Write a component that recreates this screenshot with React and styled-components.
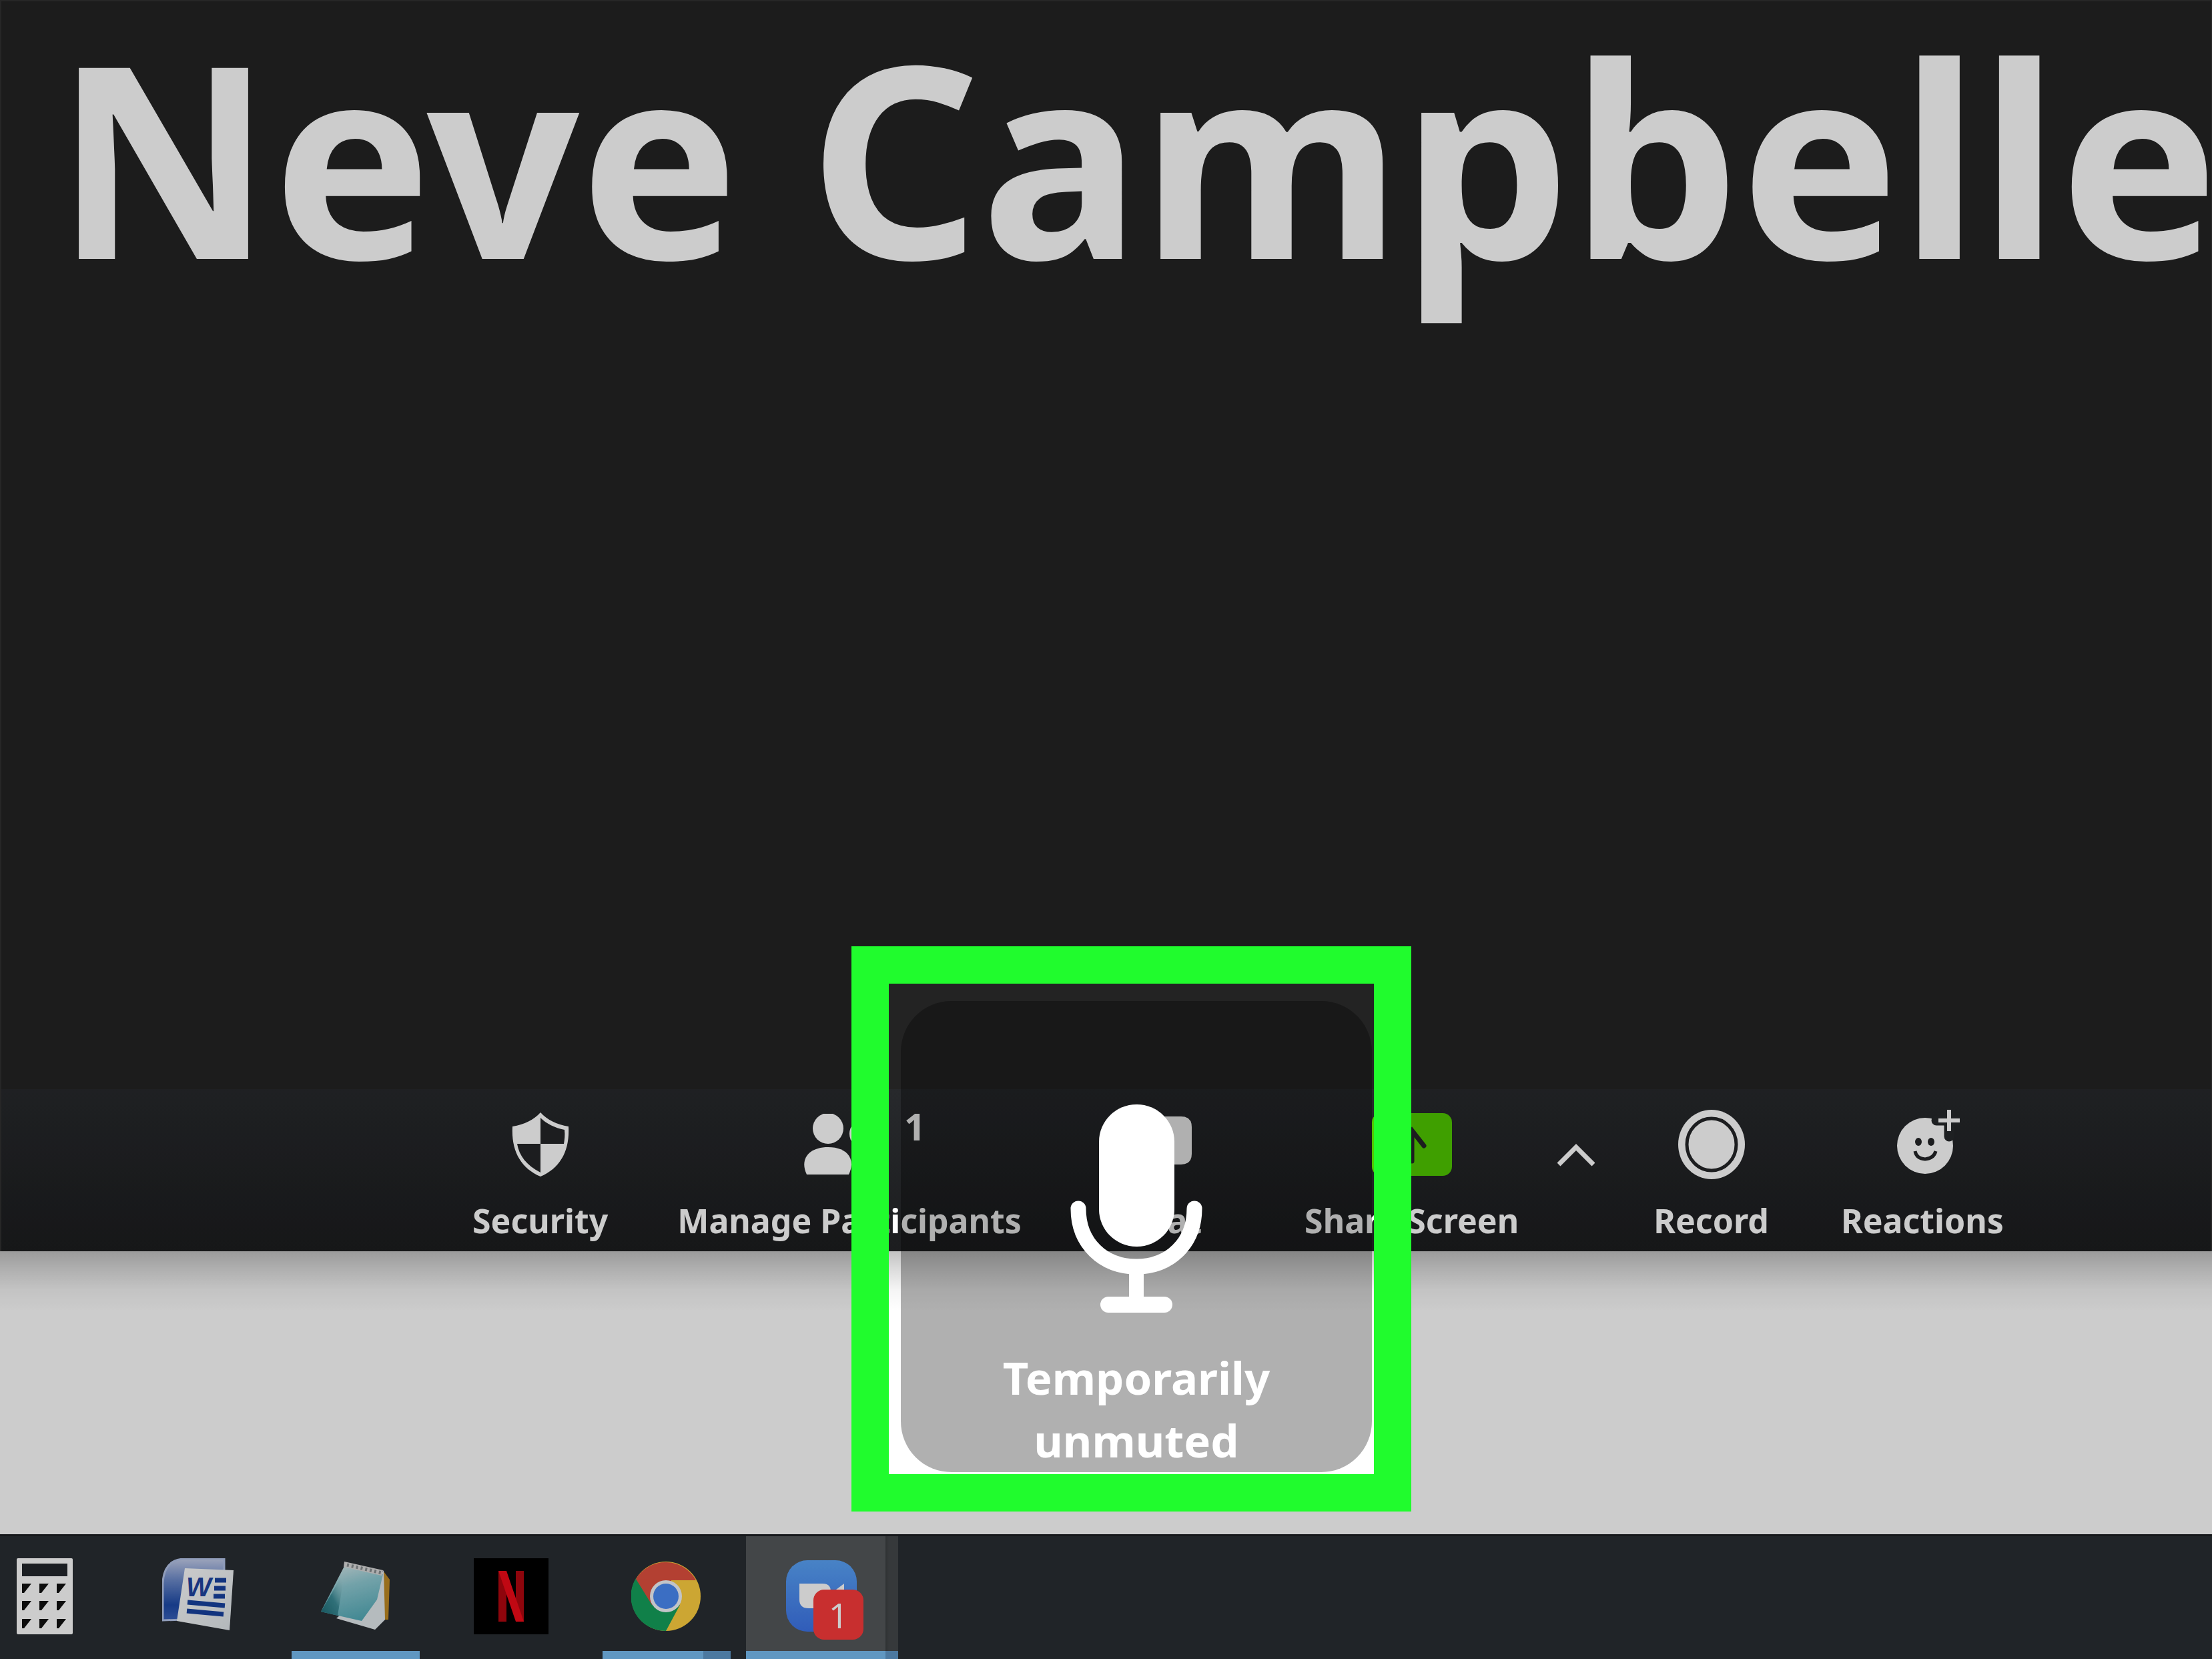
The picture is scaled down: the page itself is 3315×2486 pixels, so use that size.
import React from 'react';
import styled, { createGlobalStyle } from 'styled-components';

const GlobalStyle = createGlobalStyle`
  *, *::before, *::after { box-sizing: border-box; }
  body {
    margin: 0;
    background: #fff;
    font-family: "Noto Sans", "Open Sans", sans-serif;
  }
  button {
    border: 0;
    padding: 0;
    background: none;
    color: inherit;
    font: inherit;
    cursor: pointer;
  }
  svg { display: block; }
`;

const Screen = styled.div`
  position: relative;
  display: flex;
  flex-direction: column;
  min-height: 100vh;
  overflow: hidden;
  background: #fff;
`;

const MeetingWindow = styled.main`
  flex: 1;
  display: flex;
  flex-direction: column;
  border: 2px solid #313131;
  border-bottom: 0;
  background: #232323;
`;

const Stage = styled.section`
  flex: 1;
  padding: 30px 0 0 80px;
`;

const ParticipantName = styled.h1`
  margin: 0;
  color: #fff;
  font-size: 401px;
  font-weight: 700;
  line-height: 400px;
  white-space: nowrap;
`;

const Toolbar = styled.nav`
  display: flex;
  align-items: flex-start;
  padding: 31px 0 12px 706px;
  background: linear-gradient(#27292c, #1c1d1f);
  color: #fff;
`;

const ToolButton = styled.button`
  flex: none;
  display: flex;
  flex-direction: column;
  align-items: center;
  gap: 28px;
  margin-left: ${(p) => p.$before || 0}px;
`;

const ToolIcon = styled.span`
  position: relative;
  display: flex;
  align-items: center;
  height: 104px;
`;

const ToolLabel = styled.span`
  font-size: 50px;
  font-weight: 700;
  line-height: 68px;
  white-space: nowrap;
`;

const Count = styled.span`
  position: absolute;
  top: -4px;
  left: 100%;
  padding-left: 12px;
  font-size: 56px;
  font-weight: 700;
  line-height: 56px;
`;

const Desktop = styled.div`
  height: 424px;
  background: linear-gradient(
    rgba(0, 0, 0, 0.24),
    rgba(0, 0, 0, 0.14) 26px,
    rgba(0, 0, 0, 0.04) 58px,
    rgba(0, 0, 0, 0) 90px
  );
`;

const Taskbar = styled.nav`
  display: flex;
  gap: 5px;
  height: 187px;
  margin-left: -47px;
  background: #292d33;
  border-top: 3px solid #1c1f22;
`;

const TaskButton = styled.button`
  flex: none;
  position: relative;
  display: flex;
  flex-direction: column;
  align-items: center;
  justify-content: space-between;
  width: 228px;
  padding-top: 33px;
  background: ${(p) => (p.$active ? 'linear-gradient(90deg, #54585a 209px, #3b3e40 209px, #44484a 214px)' : 'none')};
`;

const Underline = styled.span`
  width: ${(p) => (p.$wide ? '100%' : '192px')};
  height: 12px;
  background: ${(p) =>
    p.$stack ? `linear-gradient(90deg, #78bdf2 ${p.$stack}px, #6098c8 ${p.$stack}px)` : '#78bdf2'};
`;

const Badge = styled.span`
  position: absolute;
  top: 80px;
  left: 101px;
  width: 75px;
  height: 75px;
  border-radius: 16px;
  background: #fb3b3b;
  color: #fff;
  font-family: "Open Sans", sans-serif;
  font-size: 52px;
  font-weight: 400;
  line-height: 75px;
  text-align: center;
`;

const Spotlight = styled.div`
  position: absolute;
  left: 1276px;
  bottom: 221px;
  display: flex;
  width: 839px;
  height: 847px;
  padding: 26px 3px 3px 18px;
  border: 56px solid #20fc2d;
  box-shadow: 0 0 0 4000px rgba(0, 0, 0, 0.2);
  pointer-events: none;
`;

const Toast = styled.div`
  flex: 1;
  display: flex;
  flex-direction: column;
  align-items: center;
  gap: 50px;
  padding-top: 155px;
  border-radius: 76px;
  background: rgba(0, 0, 0, 0.31);
  color: #fff;
`;

const ToastText = styled.p`
  width: 424px;
  margin: 0;
  font-size: 67px;
  font-weight: 700;
  line-height: 94px;
  text-align: center;
`;

const Shield = () => (
  <svg width="86" height="98" viewBox="0 0 86 98">
    <path d="M43 1C33 12 19 19 1 22C-1 58 13 84 43 97C73 84 87 58 85 22C67 19 53 12 43 1Z" fill="#fff" />
    <path d="M43 9C52 18 64 24 79 27C80 35 79 42 78 48H43ZM43 48V91C22 80 11 66 8 48Z" fill="#232527" />
  </svg>
);

const People = () => (
  <svg width="140" height="92" viewBox="0 0 140 92">
    <ellipse cx="38" cy="22" rx="23" ry="23" fill="#fff" />
    <path d="M6 91C-5 68 9 50 38 50S80 68 69 91Z" fill="#fff" />
    <circle cx="92" cy="30" r="22" fill="#fff" />
    <path d="M78 91C86 74 78 62 74 57C96 50 120 60 122 91Z" fill="#fff" />
  </svg>
);

const Bubble = () => (
  <svg width="86" height="92" viewBox="0 0 86 92">
    <path d="M16 4H70Q86 4 86 20V60Q86 76 70 76H46L24 92V76H16Q0 76 0 60V20Q0 4 16 4Z" fill="#fff" />
  </svg>
);

const Share = () => (
  <svg width="120" height="94" viewBox="0 0 120 94">
    <rect width="120" height="94" rx="14" fill="#4fc700" />
    <path d="M60 72V26M42 49L60 26L78 49" fill="none" stroke="#232527" strokeWidth="7" strokeLinecap="round" />
  </svg>
);

const Chevron = () => (
  <svg width="56" height="66" viewBox="0 0 56 66">
    <path d="M2 63L28 37L54 63" fill="none" stroke="#fff" strokeWidth="7" />
  </svg>
);

const RecordMark = () => (
  <svg width="100" height="104" viewBox="0 0 100 104">
    <ellipse cx="50" cy="52" rx="50" ry="52" fill="#fff" />
    <ellipse cx="50" cy="52" rx="37" ry="39" fill="none" stroke="#232527" strokeWidth="5" />
  </svg>
);

const Smiley = () => (
  <svg width="114" height="104" viewBox="-20 0 114 104">
    <circle cx="41" cy="54" r="42" fill="#fff" />
    <path d="M77 0V40M58 16H94" stroke="#26282b" strokeWidth="15" strokeLinecap="round" />
    <path d="M77 0V32M61 16H93" stroke="#fff" strokeWidth="6" />
    <ellipse cx="31" cy="48" rx="5" ry="6" fill="#232527" />
    <ellipse cx="50" cy="48" rx="5" ry="6" fill="#232527" />
    <path d="M26 62Q28 73 41 74Q54 73 57 62" fill="none" stroke="#232527" strokeWidth="5" />
  </svg>
);

const Mic = () => (
  <svg width="200" height="312" viewBox="0 0 200 312">
    <rect x="44" y="0" width="113" height="213" rx="56" fill="#fff" />
    <path d="M13 156C13 208 50 243 100 243S187 208 187 156" fill="none" stroke="#fff" strokeWidth="23" strokeLinecap="round" />
    <path d="M100 243V300" stroke="#fff" strokeWidth="22" />
    <path d="M58 300H142" stroke="#fff" strokeWidth="24" strokeLinecap="round" />
  </svg>
);

const Calculator = () => (
  <svg width="84" height="114" viewBox="0 0 84 114">
    <rect width="84" height="114" rx="2" fill="#fff" />
    <rect x="8" y="8" width="68" height="19" fill="#22262b" />
    {[38, 64, 91].map((y) =>
      [8, 34, 60].map((x) => <path key={`${x}-${y}`} d={`M${x} ${y}H${x + 14}L${x + 3} ${y + 14}H${x}Z`} fill="#111" />)
    )}
  </svg>
);

const Word = () => (
  <svg width="114" height="114" viewBox="0 0 114 114">
    <defs>
      <linearGradient id="wordBack" x1="0" y1="0" x2="0" y2="1">
        <stop offset="0" stopColor="#c3cdea" />
        <stop offset="0.35" stopColor="#6c8aca" />
        <stop offset="0.75" stopColor="#1d4aa8" />
        <stop offset="1" stopColor="#3a62bb" />
      </linearGradient>
      <linearGradient id="wordPage" x1="0" y1="0" x2="1" y2="1">
        <stop offset="0" stopColor="#fff" />
        <stop offset="1" stopColor="#dfe6ea" />
      </linearGradient>
    </defs>
    <path d="M1 93V38Q2 3 32 1H93V90Z" fill="url(#wordBack)" stroke="#b3c3e8" strokeWidth="3" />
    <path d="M34 15L107 18L101 108L22 94Z" fill="url(#wordPage)" />
    <text x="36" y="57" fontFamily="Liberation Sans, sans-serif" fontSize="40" fontWeight="700" fontStyle="italic" fill="#1e44a0">W</text>
    <path d="M79 33H96M78 45H95M77 57H94M38 66L94 71M37 79L92 84" stroke="#17419f" strokeWidth="7" />
  </svg>
);

const Notepad = () => (
  <svg width="106" height="114" viewBox="0 0 106 114">
    <defs>
      <linearGradient id="padCover" x1="0.2" y1="0" x2="0.5" y2="1">
        <stop offset="0" stopColor="#d6e8ea" />
        <stop offset="0.4" stopColor="#90cbd4" />
        <stop offset="1" stopColor="#55acb9" />
      </linearGradient>
      <linearGradient id="padShade" x1="0" y1="1" x2="1" y2="0">
        <stop offset="0" stopColor="#1d6b75" />
        <stop offset="0.5" stopColor="#3c8c97" />
        <stop offset="1" stopColor="#a5d0d4" stopOpacity="0" />
      </linearGradient>
    </defs>
    <path d="M95 20L104 32L102 92L93 92Z" fill="#bf8a24" />
    <path d="M95 18L97 92L82 107L24 90L60 60Z" fill="#e3eaee" />
    <path d="M37 10L94 24L85 62L62 94L1 80Z" fill="url(#padCover)" />
    <path d="M30 30L1 80L26 86L34 36Z" fill="url(#padShade)" />
    <path d="M36 5L94 18L92 26L35 13Z" fill="#dadada" />
    <path d="M40 10L92 22" stroke="#888e90" strokeWidth="5" strokeDasharray="3 4" />
  </svg>
);

const Netflix = () => (
  <svg width="112" height="114" viewBox="0 0 112 114">
    <rect width="112" height="114" fill="#000" />
    <rect x="37" y="19" width="12" height="76" fill="#b20710" />
    <rect x="63" y="19" width="12" height="76" fill="#b20710" />
    <path d="M37 19H49L75 95H63Z" fill="#f00a18" />
  </svg>
);

const Chrome = () => (
  <svg width="106" height="114" viewBox="0 0 106 114">
    <circle cx="52" cy="57" r="52" fill="#ffd040" />
    <path d="M52 57L7 31A52 52 0 0 1 97 33H52Z" fill="#e0503f" />
    <path d="M7 30A52 52 0 0 0 52 109L73 70L52 57L30 66Z" fill="#15a05c" />
    <path d="M7 31L31 70L52 57L60 33Z" fill="#e0503f" />
    <circle cx="52" cy="57" r="24" fill="#f3f5fa" />
    <circle cx="52" cy="57" r="19" fill="#4a8af4" />
  </svg>
);

const ZoomLogo = () => (
  <svg width="108" height="114" viewBox="0 0 108 114">
    <defs>
      <linearGradient id="zoomBlue" x1="0" y1="0" x2="0" y2="1">
        <stop offset="0" stopColor="#5aa4f8" />
        <stop offset="1" stopColor="#3d74e8" />
      </linearGradient>
    </defs>
    <rect x="0" y="3" width="106" height="107" rx="32" fill="url(#zoomBlue)" />
    <path d="M20 38H55Q67 38 67 50V75H34Q20 75 20 62Z" fill="#fff" />
    <path d="M71 50L87 38V74L71 63Z" fill="#fff" />
  </svg>
);

const tools = [
  { label: 'Security', icon: <Shield />, before: 0 },
  { label: 'Manage Participants', icon: <People />, before: 104, count: 1 },
  { label: 'Chat', icon: <Bubble />, before: 154 },
  { label: 'Share Screen', icon: <Share />, before: 154 },
  { name: 'Share options', icon: <Chevron />, before: 58 },
  { label: 'Record', icon: <RecordMark />, before: 88 },
  { label: 'Reactions', icon: <Smiley />, before: 108 },
];

const apps = [
  { name: 'Calculator', icon: <Calculator /> },
  { name: 'Word', icon: <Word /> },
  { name: 'Notepad', icon: <Notepad />, running: true },
  { name: 'Netflix', icon: <Netflix /> },
  { name: 'Chrome', icon: <Chrome />, running: true, stack: 151 },
  { name: 'Zoom', icon: <ZoomLogo />, running: true, stack: 209, active: true, badge: 1 },
];

export default function App() {
  return (
    <>
      <GlobalStyle />
      <Screen>
        <MeetingWindow>
          <Stage>
            <ParticipantName>Neve Campbelle</ParticipantName>
          </Stage>
          <Toolbar>
            {tools.map((t) => (
              <ToolButton key={t.label || t.name} type="button" aria-label={t.name} $before={t.before}>
                <ToolIcon>
                  {t.icon}
                  {t.count && <Count>{t.count}</Count>}
                </ToolIcon>
                {t.label && <ToolLabel>{t.label}</ToolLabel>}
              </ToolButton>
            ))}
          </Toolbar>
        </MeetingWindow>
        <Desktop />
        <Taskbar>
          {apps.map((a) => (
            <TaskButton key={a.name} type="button" aria-label={a.name} $active={a.active}>
              {a.icon}
              {a.badge && <Badge>{a.badge}</Badge>}
              {a.running && <Underline $wide={a.active} $stack={a.stack} />}
            </TaskButton>
          ))}
        </Taskbar>
        <Spotlight>
          <Toast role="status">
            <Mic />
            <ToastText>Temporarily unmuted</ToastText>
          </Toast>
        </Spotlight>
      </Screen>
    </>
  );
}
